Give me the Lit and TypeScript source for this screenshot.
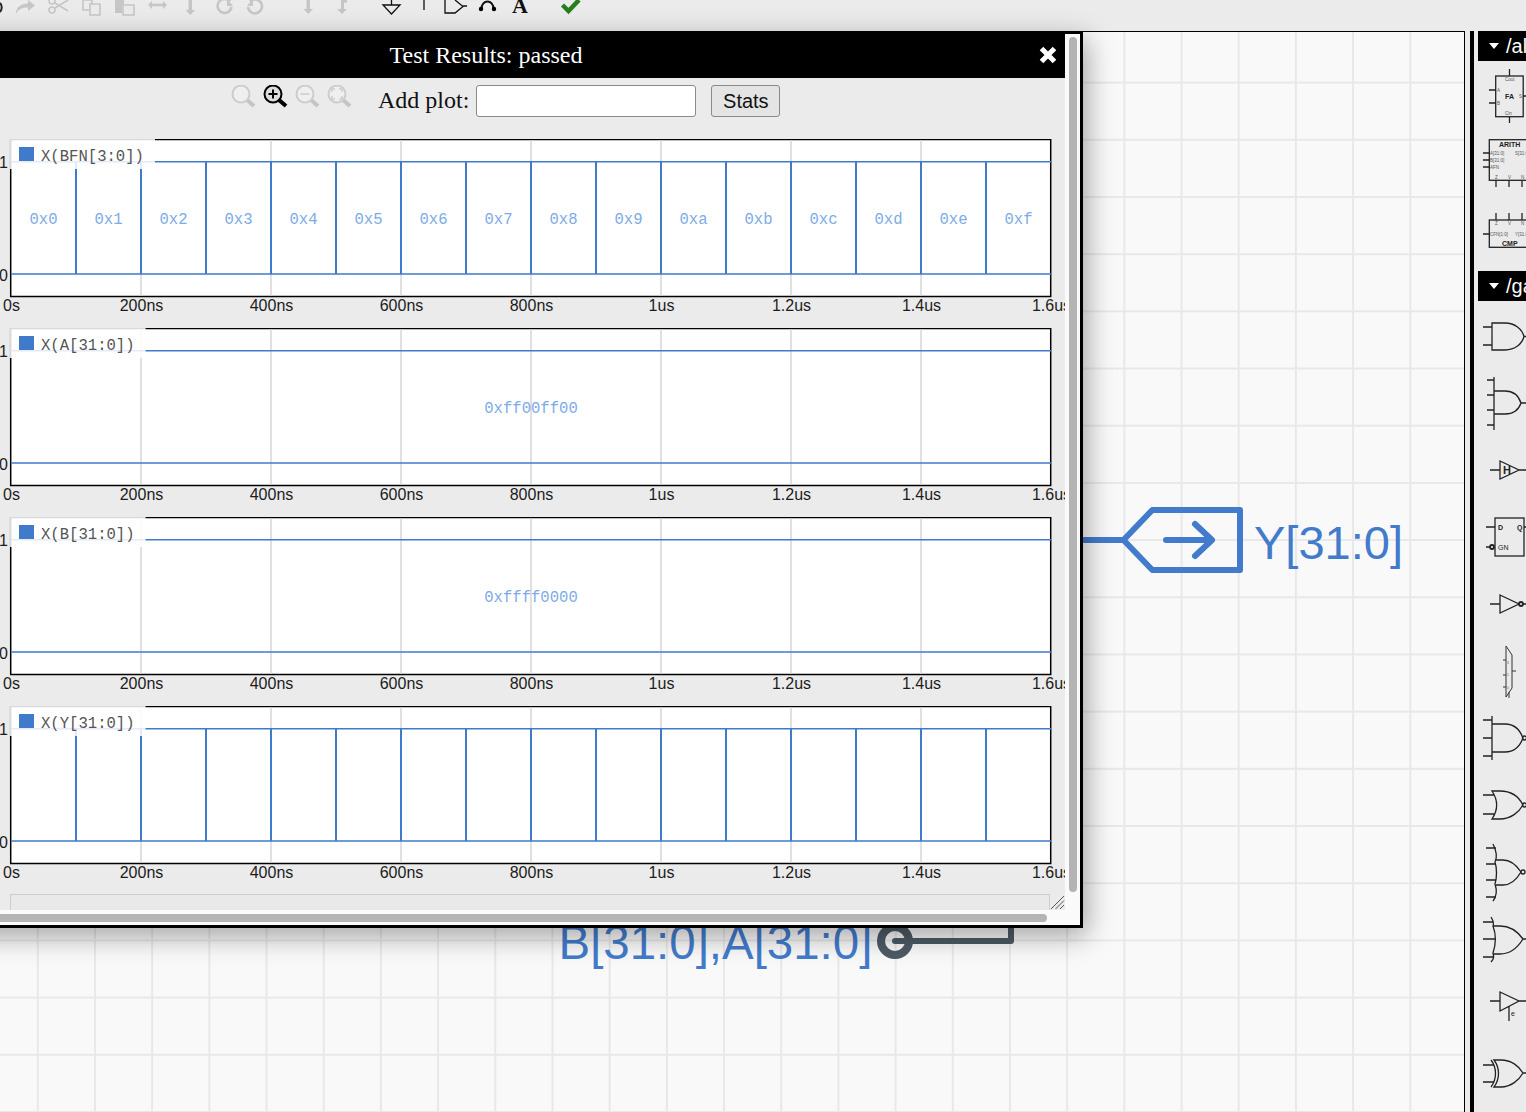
import { LitElement, html, svg, css } from "lit";
import { customElement, property } from "lit/decorators.js";

const TICKS = ["0s", "200ns", "400ns", "600ns", "800ns", "1us", "1.2us", "1.4us", "1.6us"];
const EDGES = Array.from({ length: 15 }, (_, i) => 76 + i * 65);

@customElement("plot-chart")
class PlotChart extends LitElement {
    @property() name = "";
    @property({ type: Array }) labels: string[] = [];
    @property({ type: Boolean }) edges = false;

    static styles = css`
        :host {
            display: block;
        }
        svg {
            display: block;
        }
        .frame {
            fill: #fff;
            stroke: #000;
            stroke-width: 1.5;
        }
        .grid {
            stroke: #d6d6d6;
            stroke-width: 1.5;
        }
        .trace {
            stroke: #3f7acb;
            stroke-width: 1.5;
            fill: none;
        }
        .edge {
            stroke: #3f7acb;
            stroke-width: 2;
        }
        .value {
            font: 15.6px "Liberation Mono", monospace;
            fill: #7dabe8;
            text-anchor: middle;
        }
        .legend-bg {
            fill: #fff;
            fill-opacity: 0.85;
        }
        .swatch {
            fill: #3f7acb;
        }
        .legend {
            font: 15.6px "Liberation Mono", monospace;
            fill: #555;
        }
        .tick {
            font: 16px "Liberation Sans", Arial, sans-serif;
            fill: #1c1c1c;
            text-anchor: middle;
        }
        .ytick {
            text-anchor: end;
        }
    `;

    render() {
        const legendEnd = 41 + this.name.length * 9.36 + 11;
        const step = 1040 / this.labels.length;
        return html`<svg width="1065" height="177" viewBox="0 0 1065 177">
            <rect class="frame" x="10.7" y="0.5" width="1040" height="157"></rect>
            ${[141, 271, 401, 531, 661, 791, 921].map(
                (x) => svg`<line class="grid" x1=${x} x2=${x} y1="1" y2="157"></line>`
            )}
            <path class="trace" d="M11 22.7H1051M11 135H1051"></path>
            ${this.edges
                ? EDGES.map((x) => svg`<line class="edge" x1=${x} x2=${x} y1="22.7" y2="135"></line>`)
                : ""}
            ${this.labels.map(
                (l, i) => svg`<text class="value" x=${11 + step * i + step / 2} y="85.4">${l}</text>`
            )}
            <rect class="legend-bg" x="10" y="0" width=${legendEnd - 10} height="30"></rect>
            <rect class="swatch" x="19" y="8" width="15" height="14"></rect>
            <text class="legend" x="41" y="22.4">${this.name}</text>
            <text class="tick ytick" x="8" y="29">1</text>
            <text class="tick ytick" x="8" y="142">0</text>
            ${TICKS.map(
                (t, i) => svg`<text class="tick" x=${11.5 + i * 130} y="172">${t}</text>`
            )}
        </svg>`;
    }
}

const magnifier = (cx: number, on: boolean, mark: unknown) => svg`
    <g class=${on ? "mag on" : "mag"}>
        <line class="handle" x1=${cx + 6} y1="100" x2=${cx + 13} y2="106"></line>
        <circle cx=${cx} cy="94" r="8.5"></circle>
        ${mark}
    </g>`;

const toolbarIcons = svg`
    <path class="dark" d="M0 3C2 5 2.500 9 0 12"></path>
    <path class="off" d="M16 14C16 7 21 3.500 28 3.500V0L35 5.500 28 11V7.500C22 7.500 18 9 16 14Z"></path>
    <g class="off-line">
        <circle cx="52" cy="1" r="3"></circle>
        <circle cx="52" cy="10" r="3"></circle>
        <path d="M55 3 68 11M55 8 68 0"></path>
        <path d="M83 0V10H89M90 4H100V15H90ZM83 0H92V4"></path>
        <path d="M123 5H134V15H123Z"></path>
    </g>
    <g class="off-thick">
        <path d="M151 5H164"></path>
        <path d="M230 1.500A7 7 0 1 0 231.500 7M250 1.500A7 7 0 1 1 248 7"></path>
    </g>
    <path class="off" d="M115 0H124V5H122V13H115Z"></path>
    <path class="off" d="M148 5 152 1V9ZM167 5 163 1V9ZM188.500 0H192V10H195L190.200 15 185.500 10H188.500ZM306.500 0H310V9H313L308.200 14 303.500 9H306.500ZM337 9 341 9V0H347V2.500H344V9H347L342 14Z"></path>
    <path class="off" d="M227 -1V6H233ZM253 -1V6H247Z"></path>
    <g class="on-line">
        <path d="M391.500 0V5M383 5H400L391.500 14Z"></path>
        <path d="M424 0V10"></path>
        <path d="M445 0V13H455L463 6.500 455 0M463 6H467"></path>
        <path class="thick" d="M481.500 9C481.500 -1 493.500 -1 493.500 9"></path>
    </g>
    <circle cx="481" cy="9" r="2.200"></circle>
    <circle cx="494" cy="9" r="2.200"></circle>
    <text class="bold-a" x="512" y="13">A</text>
    <path class="check" d="M562.500 5 568.500 11 579 0"></path>
`;

const alu = svg`
    <g class="part">
        <rect x="1495.700" y="76" width="27.500" height="40.700"></rect>
        <path d="M1509.500 69V76M1509.500 117V123M1489 90H1496M1489 103H1496M1523 96H1526"></path>
        <text class="tiny" x="1505" y="81">Cout</text>
        <text class="tiny" x="1497" y="92">A</text>
        <text class="tiny" x="1497" y="105">B</text>
        <text class="tiny" x="1519" y="98">S</text>
        <text class="tiny" x="1505" y="115">Cin</text>
        <text class="bold" x="1505" y="99">FA</text>

        <rect x="1489.300" y="139.700" width="50" height="40.600"></rect>
        <path d="M1483 153H1490M1483 160H1490M1483 167H1490M1496 180V187M1509 180V187M1522 180V187"></path>
        <text class="bold" x="1499" y="147">ARITH</text>
        <text class="tiny" x="1490" y="155">A[31:0]</text>
        <text class="tiny" x="1515" y="155">S[31:0]</text>
        <text class="tiny" x="1490" y="162">B[31:0]</text>
        <text class="tiny" x="1490" y="169">AFN</text>
        <text class="tiny" x="1495" y="179">Z</text>
        <text class="tiny" x="1508" y="179">V</text>
        <text class="tiny" x="1521" y="179">N</text>

        <rect x="1489.300" y="220" width="50" height="27.300"></rect>
        <path d="M1496 213V220M1509 213V220M1522 213V220M1483 234H1490"></path>
        <text class="tiny" x="1495" y="225">Z</text>
        <text class="tiny" x="1508" y="225">V</text>
        <text class="tiny" x="1521" y="225">N</text>
        <text class="tiny" x="1490" y="236">CFN[1:0]</text>
        <text class="tiny" x="1515" y="236">Y[31:0]</text>
        <text class="bold" x="1502" y="246">CMP</text>
    </g>
`;

const gates = svg`
    <g class="part">
        <path d="M1483 327H1492M1483 345H1492M1492 323H1505C1515 323 1522 329 1524 336.500 1522 344 1515 350 1505 350H1492ZM1524 336.500H1526"></path>

        <path d="M1494 377V430M1487 380H1494M1487 395H1494M1487 410H1494M1487 425H1494M1494 391H1505C1514 391 1519 397 1521 403 1519 409 1514 414 1505 414H1494M1521 403H1526"></path>

        <path d="M1500 461 1519 470 1500 479ZM1490 470H1500M1519 470H1526"></path>
        <text class="bold big" x="1503" y="474">H</text>

        <rect x="1495" y="518" width="29" height="38"></rect>
        <path d="M1486 527H1495M1486 547H1490M1524 527H1526"></path>
        <circle class="bubble" cx="1492" cy="547" r="2"></circle>
        <text class="small bold" x="1498" y="530">D</text>
        <text class="small bold" x="1517" y="530">Q</text>
        <text class="small" x="1498" y="550">GN</text>

        <path d="M1500 595 1519 604 1500 613ZM1490 604H1500M1523 604H1526"></path>
        <circle class="bubble" cx="1521" cy="604" r="2"></circle>

        <path class="hair" d="M1506 646 1512 655V688L1506 697ZM1503 660H1506M1503 675H1506M1503 687H1506M1512 671H1516M1509 692V698"></path>
        <text class="micro" x="1507" y="664">3</text>
        <text class="micro" x="1507" y="676">1</text>
        <text class="micro" x="1507" y="689">0</text>

        <path d="M1492 716V760M1483 720H1492M1483 738H1492M1483 756H1492M1492 724H1505C1514 724 1520 730 1523 738 1520 746 1514 752 1505 752H1492"></path>
        <circle cx="1524.500" cy="738" r="2"></circle>

        <path d="M1483 795H1494M1483 814H1494M1492 791H1500C1511 791 1519 797 1523 805 1519 812 1511 819 1500 819H1492C1498 810 1498 800 1492 791Z"></path>
        <circle cx="1524.500" cy="805" r="2"></circle>

        <path d="M1486 848H1496M1486 864H1496M1486 880H1496M1486 897H1496M1493 844C1497 852 1497 858 1495 862 1497 868 1497 878 1495 884 1497 890 1497 896 1493 901M1496 860H1503C1511 860 1517 866 1521 872 1517 879 1511 885 1503 885H1496"></path>
        <circle cx="1523" cy="872" r="2"></circle>

        <path d="M1483 922H1493M1483 939H1495M1483 957H1493M1491 917C1494 922 1494 924 1493 926 1496 934 1496 944 1493 953 1494 957 1494 959 1491 962M1493 926H1500C1510 926 1518 932 1523 939 1518 947 1510 954 1500 954H1493M1523 939H1526"></path>

        <path d="M1500 992 1519 1001 1500 1011ZM1490 1001H1500M1519 1001H1526M1509 1006V1021"></path>
        <text class="small" x="1511" y="1016">e</text>

        <path d="M1483 1065H1494M1483 1082H1494M1491 1060C1497 1068 1497 1079 1491 1087M1494 1060H1501C1511 1060 1519 1066 1523 1073 1519 1080 1511 1087 1501 1087H1494C1500 1079 1500 1068 1494 1060ZM1523 1073H1526"></path>
    </g>
`;

@customElement("app-root")
class AppRoot extends LitElement {
    static styles = css`
        :host {
            display: block;
            width: 1526px;
            height: 1112px;
            overflow: hidden;
            position: relative;
            background: #ebebeb;
        }
        .page {
            display: flex;
            flex-direction: column;
            height: 100%;
        }
        .toolbar {
            display: block;
            height: 31px;
            flex: none;
        }
        .off {
            fill: #c6c6c6;
        }
        .off-line path,
        .off-line circle {
            fill: none;
            stroke: #c6c6c6;
            stroke-width: 1.6;
        }
        .off-thick path {
            fill: none;
            stroke: #c6c6c6;
            stroke-width: 2.6;
        }
        .on-line path {
            fill: none;
            stroke: #111;
            stroke-width: 1.3;
        }
        .on-line .thick {
            stroke-width: 2;
        }
        .dark {
            fill: none;
            stroke: #222;
            stroke-width: 2;
        }
        .bold-a {
            font: bold 22px "Liberation Serif", serif;
            fill: #111;
        }
        .check {
            fill: none;
            stroke: #2a7d1e;
            stroke-width: 4.5;
        }
        .main {
            display: flex;
            flex: 1;
            min-height: 0;
        }
        .canvas {
            position: relative;
            width: 1465px;
            flex: none;
            box-sizing: border-box;
            border-top: 1px solid #000;
            border-right: 1px solid #000;
            background-color: #f9f9f9;
            background-image: linear-gradient(to right, #e8e8e8 1.500px, transparent 1.500px),
                linear-gradient(to bottom, #e8e8e8 1.500px, transparent 1.500px);
            background-size: 57.200px 57.200px;
            background-position: 36.800px 49.600px;
        }
        .diagram {
            position: absolute;
            left: 0;
            top: 0;
        }
        .wire-blue {
            fill: none;
            stroke: #427bcc;
            stroke-width: 6;
            stroke-linejoin: round;
            stroke-linecap: round;
        }
        .wire-grey {
            fill: none;
            stroke: #4d5b65;
            stroke-width: 6;
            stroke-linejoin: round;
            stroke-linecap: round;
        }
        .pin {
            fill: none;
            stroke: #4d5b65;
            stroke-width: 8;
        }
        .signal {
            font: 47px "Liberation Sans", Arial, sans-serif;
            font-kerning: none;
            fill: #427bcc;
        }
        .signal.wide {
            font-size: 47.450px;
        }
        .side {
            flex: 1;
            min-width: 0;
            margin-left: 5px;
            border-left: 4px solid #000;
            padding-left: 4px;
            display: flex;
            flex-direction: column;
            overflow: hidden;
        }
        .group {
            flex: none;
            height: 30px;
            background: #000;
            color: #fff;
            display: flex;
            align-items: center;
            gap: 7px;
            padding-left: 11px;
            font: 20px "Liberation Sans", Arial, sans-serif;
            white-space: nowrap;
        }
        .caret {
            width: 0;
            height: 0;
            border-left: 5.500px solid transparent;
            border-right: 5.500px solid transparent;
            border-top: 6px solid #fff;
        }
        .palette {
            display: block;
            flex: none;
        }
        .part rect,
        .part path,
        .part circle {
            fill: none;
            stroke: #222;
            stroke-width: 1.300;
        }
        .part .bubble {
            stroke-width: 1.800;
        }
        .part .hair {
            stroke: #333;
            stroke-width: 1;
        }
        .part text {
            font-family: "Liberation Sans", Arial, sans-serif;
            fill: #222;
        }
        .part .tiny {
            font-size: 4.500px;
            fill: #555;
        }
        .part .micro {
            font-size: 3.500px;
            fill: #666;
        }
        .part .bold {
            font-size: 7px;
            font-weight: bold;
        }
        .part .big {
            font-size: 11px;
        }
        .part .small {
            font-size: 7px;
        }
        .dialog {
            position: absolute;
            left: -96px;
            top: 31px;
            width: 1179px;
            height: 897px;
            box-sizing: border-box;
            border: 3px solid #000;
            background: #fafafa;
            box-shadow: 4px 8px 26px rgba(0, 0, 0, 0.35);
        }
        .pane {
            width: 1158px;
            height: 876px;
            background: #ebebeb;
            display: flex;
            flex-direction: column;
            overflow: hidden;
        }
        .title {
            flex: none;
            height: 42px;
            padding-bottom: 2px;
            background: #000;
            color: #fff;
            display: flex;
            align-items: center;
            justify-content: center;
            position: relative;
            font: 24px "Liberation Serif", serif;
        }
        .close {
            position: absolute;
            right: 8px;
            top: 12px;
        }
        .close path {
            stroke: #fff;
            stroke-width: 5;
        }
        .tools {
            flex: none;
            height: 46px;
            display: flex;
            align-items: center;
            padding-left: 324px;
            font: 24px "Liberation Serif", serif;
            color: #111;
        }
        .label {
            margin-bottom: 2px;
        }
        .zoom {
            display: block;
            margin-right: 25px;
        }
        .mag circle {
            fill: #efefef;
            stroke: #cdcdcd;
            stroke-width: 2;
        }
        .mag .handle {
            stroke: #c4c4c4;
            stroke-width: 4;
        }
        .mag .mark {
            fill: none;
            stroke: #cdcdcd;
            stroke-width: 1.500;
        }
        .mag.on circle {
            fill: #dcdcdc;
            stroke: #000;
        }
        .mag.on .handle {
            stroke: #000;
        }
        .mag.on .mark {
            stroke: #000;
            stroke-width: 2;
        }
        .field {
            width: 220px;
            height: 32px;
            box-sizing: border-box;
            margin-left: 7px;
            border: 1px solid #8a8a8a;
            border-radius: 3px;
            background: #fff;
        }
        .stats {
            width: 69px;
            height: 32px;
            box-sizing: border-box;
            margin-left: 15px;
            padding: 0;
            border: 1px solid #8a8a8a;
            border-radius: 3px;
            background: #e4e4e4;
            color: #111;
            font: 20px "Liberation Sans", Arial, sans-serif;
        }
        .plots {
            flex: none;
            margin-top: 15px;
            padding-left: 93px;
            display: flex;
            flex-direction: column;
            gap: 12px;
        }
        .foot {
            flex: none;
            display: flex;
            margin: 11px 0 0 103px;
        }
        .well {
            width: 1040px;
            height: 16px;
            box-sizing: border-box;
            border: 1px solid #cdcdcd;
            border-bottom: none;
            background: #e9e9e9;
        }
        .grip path {
            stroke: #555;
            stroke-width: 1;
            fill: none;
        }
        .vbar {
            position: absolute;
            left: 1162px;
            top: 3px;
            width: 8px;
            height: 855px;
            border-radius: 4px;
            background: #b4b4b4;
        }
        .hbar {
            position: absolute;
            left: 0;
            top: 880px;
            width: 1140px;
            height: 8px;
            border-radius: 4px;
            background: #b4b4b4;
        }
    `;

    render() {
        const hex = Array.from({ length: 16 }, (_, i) => "0x" + i.toString(16));
        return html`<div class="page">
            <svg class="toolbar" width="1526" height="31" viewBox="0 0 1526 31">${toolbarIcons}</svg>
            <div class="main">
                <div class="canvas">
                    <svg class="diagram" width="1464" height="1080" viewBox="0 32 1464 1080">
                        <path class="wire-blue" d="M1083 540H1123.500L1152.300 510H1240V570H1152.300L1123.500 540"></path>
                        <path class="wire-blue" d="M1166 540H1212M1195 524 1212 540 1195 556"></path>
                        <text class="signal" x="1254" y="559">Y[31:0]</text>
                        <text class="signal wide" x="558.500" y="959">B[31:0],A[31:0]</text>
                        <path class="wire-grey" d="M895 941H1011V925"></path>
                        <circle class="pin" cx="895" cy="941" r="14"></circle>
                    </svg>
                </div>
                <div class="side">
                    <div class="group"><span class="caret"></span>/alu</div>
                    <svg class="palette" width="48" height="210" viewBox="1478 61 48 210">${alu}</svg>
                    <div class="group"><span class="caret"></span>/gates</div>
                    <svg class="palette" width="48" height="811" viewBox="1478 301 48 811">${gates}</svg>
                </div>
            </div>
            <div class="dialog">
                <div class="pane">
                    <div class="title">
                        Test Results: passed
                        <svg class="close" width="18" height="18" viewBox="0 0 18 18"><path d="M2.500 2.500 15.500 15.500M15.500 2.500 2.500 15.500"></path></svg>
                    </div>
                    <div class="tools">
                        <svg class="zoom" width="122" height="32" viewBox="231 85 122 32">
                            ${magnifier(241, false, "")}
                            ${magnifier(273, true, svg`<path class="mark" d="M268.500 94H277.500M273 89.500V98.500"></path>`)}
                            ${magnifier(305, false, svg`<path class="mark" d="M300.500 94H309.500"></path>`)}
                            ${magnifier(337, false, svg`<path class="mark" d="M332 92V89H335M339 89H342V92M342 96V99H339M335 99H332V96"></path>`)}
                        </svg>
                        <span class="label">Add plot:</span>
                        <div class="field"></div>
                        <button class="stats">Stats</button>
                    </div>
                    <div class="plots">
                        <plot-chart name="X(BFN[3:0])" .labels=${hex} edges></plot-chart>
                        <plot-chart name="X(A[31:0])" .labels=${["0xff00ff00"]}></plot-chart>
                        <plot-chart name="X(B[31:0])" .labels=${["0xffff0000"]}></plot-chart>
                        <plot-chart name="X(Y[31:0])" edges></plot-chart>
                    </div>
                    <div class="foot">
                        <div class="well"></div>
                        <svg class="grip" width="15" height="16" viewBox="0 0 15 16"><path d="M1 15 14 2M5.500 15 14 6.500M10 15 14 11"></path></svg>
                    </div>
                </div>
                <div class="vbar"></div>
                <div class="hbar"></div>
            </div>
        </div>`;
    }
}
